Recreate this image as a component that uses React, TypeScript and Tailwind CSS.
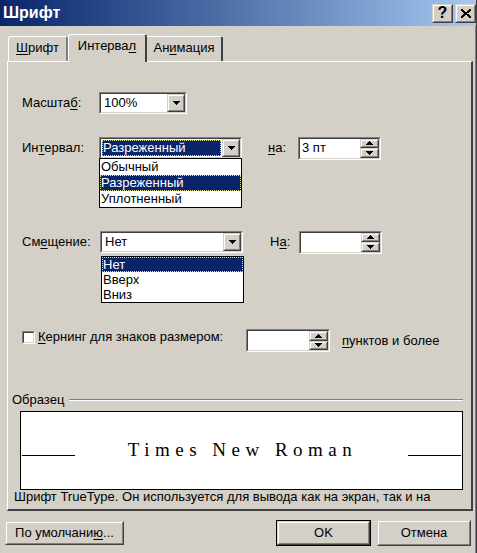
import React from "react";

const sunkenOuter = "border border-t-[#808080] border-l-[#808080] border-b-white border-r-white";
const sunkenInner = "border border-t-[#404040] border-l-[#404040] border-b-[#d4d0c8] border-r-[#d4d0c8]";
const raisedOuter = "border border-t-[#d4d0c8] border-l-[#d4d0c8] border-b-[#404040] border-r-[#404040]";
const raisedInner = "border border-t-white border-l-white border-b-[#808080] border-r-[#808080]";

function Down() {
  return (
    <svg width="7" height="4" shapeRendering="crispEdges">
      <path d="M0 0h7v1h-1v1h-1v1h-1v1h-1v-1h-1v-1h-1v-1h-1z" fill="#000" />
    </svg>
  );
}

function Up() {
  return (
    <svg width="7" height="4" shapeRendering="crispEdges">
      <path d="M3 0h1v1h1v1h1v1h1v1h-7v-1h1v-1h1v-1h1z" fill="#000" />
    </svg>
  );
}

function Raised({ className, children }: { className: string; children?: React.ReactNode }) {
  return (
    <div className={`${raisedOuter} ${className} bg-[#d4d0c8]`}>
      <div className={`${raisedInner} h-full w-full flex items-center justify-center`}>{children}</div>
    </div>
  );
}

function U({ children }: { children: React.ReactNode }) {
  return <span className="underline underline-offset-2">{children}</span>;
}

type Item = { label: string; sel?: boolean };

function Combo({
  width,
  value,
  focus,
  list,
  listClass,
  itemH,
}: {
  width: string;
  value: string;
  focus?: boolean;
  list?: Item[];
  listClass?: string;
  itemH?: string;
}) {
  return (
    <div className={`relative ${width} h-[22px]`}>
      <div className={`${sunkenOuter} h-full`}>
        <div className={`${sunkenInner} h-full bg-white flex`}>
          <div className="flex-1 flex items-center p-px">
            {focus ? (
              <div className="h-full w-full bg-[#0a246a] text-white px-[1px] flex items-center outline-1 outline-dotted outline-[#e0e0a0] -outline-offset-1">
                {value}
              </div>
            ) : (
              <span className="pl-[2px]">{value}</span>
            )}
          </div>
          <Raised className="w-[18px] h-full">
            <Down />
          </Raised>
        </div>
      </div>
      {list && (
        <div className={`absolute z-20 bg-white border border-black ${listClass}`}>
          {list.map((it) => (
            <div
              key={it.label}
              className={`${itemH} flex items-center pl-[1px] ${
                it.sel ? "bg-[#0a246a] text-white outline-1 outline-dotted outline-[#e0e0a0] -outline-offset-1" : ""
              }`}
            >
              {it.label}
            </div>
          ))}
        </div>
      )}
    </div>
  );
}

function Spin({ width, value }: { width: string; value?: string }) {
  return (
    <div className={`${sunkenOuter} ${width} h-[23px]`}>
      <div className={`${sunkenInner} h-full bg-white flex`}>
        <div className="flex-1 flex items-center pl-[2px]">{value}</div>
        <div className="flex flex-col w-[19px] h-full">
          <Raised className="flex-1">
            <Up />
          </Raised>
          <Raised className="flex-1">
            <Down />
          </Raised>
        </div>
      </div>
    </div>
  );
}

export default function App() {
  return (
    <div className="w-[477px] h-[553px] bg-[#d4d0c8] font-['Liberation_Sans',Arial,sans-serif] text-[13px] text-black overflow-hidden relative">
      <div className="absolute right-0 top-0 bottom-0 w-[1px] bg-[#404040]" />
      <div className="absolute right-[1px] top-[26px] bottom-0 w-[1px] bg-[#808080]" />

      {/* title bar */}
      <div className="h-[26px] flex items-center justify-between pl-[3px] pr-[1px] bg-gradient-to-r from-[#0a246a] to-[#a6caf0]">
        <span className="text-white font-bold text-[16px] leading-none">Шрифт</span>
        <div className="flex gap-[2px]">
          <Raised className="w-[21px] h-[19px]">
            <span className="font-bold text-[16px] leading-none">?</span>
          </Raised>
          <Raised className="w-[21px] h-[19px]">
            <svg width="10" height="9" shapeRendering="crispEdges">
              <path d="M0 0L10 9M10 0L0 9" stroke="#000" strokeWidth="2" />
            </svg>
          </Raised>
        </div>
      </div>

      {/* tabs */}
      <div className="relative z-10 mt-[8px] ml-[8px] h-[27px] flex items-end">
        <div className="w-[60px] h-[25px] border-l border-t border-white border-r-2 border-r-[#808080] rounded-tl-[3px] rounded-tr-[3px] flex items-center justify-center pb-[2px]">
          <U>Ш</U>рифт
        </div>
        <div className="w-[79px] h-[28px] -mb-[1px] bg-[#d4d0c8] border-l border-t border-white border-r-2 border-r-[#404040] rounded-tl-[3px] rounded-tr-[3px] flex items-center justify-center pb-[5px]">
          Интерва<U>л</U>
        </div>
        <div className="w-[76px] h-[25px] border-t border-white border-r-2 border-r-[#404040] rounded-tr-[3px] flex items-center justify-center pb-[2px]">
          Ан<U>и</U>мация
        </div>
      </div>

      {/* panel */}
      <div className="ml-[7px] w-[466px] h-[450px] border-l border-t border-white border-r-2 border-r-[#404040] border-b-2 border-b-[#404040] flex flex-col">
        <div className="mt-[30px] h-[22px] flex items-center pl-[14px]">
          <span className="w-[77px]">
            Масшта<U>б</U>:
          </span>
          <Combo width="w-[88px]" value="100%" />
        </div>

        <div className="mt-[23px] h-[22px] flex items-center pl-[14px]">
          <span className="w-[77px]">
            Ин<U>т</U>ервал:
          </span>
          <Combo
            width="w-[143px]"
            value="Разреженный"
            focus
            list={[{ label: "Обычный" }, { label: "Разреженный", sel: true }, { label: "Уплотненный" }]}
            listClass="left-0 top-[21px] w-[143px]"
            itemH="h-[16px]"
          />
          <span className="ml-[26px] w-[30px]">
            <U>н</U>а:
          </span>
          <Spin width="w-[83px]" value="3 пт" />
        </div>

        <div className="mt-[72px] h-[22px] flex items-center pl-[14px]">
          <span className="w-[78px]">
            См<U>е</U>щение:
          </span>
          <Combo
            width="w-[143px]"
            value="Нет"
            list={[{ label: "Нет", sel: true }, { label: "Вверх" }, { label: "Вниз" }]}
            listClass="left-[1px] top-[25px] w-[143px]"
            itemH="h-[15px]"
          />
          <span className="ml-[27px] w-[29px]">
            Н<U>а</U>:
          </span>
          <Spin width="w-[83px]" value="" />
        </div>

        <div className="mt-[76px] h-[24px] flex items-start pl-[14px]">
          <div className={`${sunkenOuter} w-[13px] h-[13px] mt-[2px]`}>
            <div className={`${sunkenInner} h-full bg-white`} />
          </div>
          <span className="ml-[3px] w-[208px] leading-[16px]">
            <U>К</U>ернинг для знаков размером:
          </span>
          <Spin width="w-[84px]" />
          <span className="ml-[12px] leading-[24px]">
            <U>п</U>унктов и более
          </span>
        </div>

        <div className="mt-[40px] h-[14px] flex items-center pl-[4px] pr-[8px]">
          <span className="leading-[14px]">Образец</span>
          <div className="flex-1 ml-[5px] border-t border-t-[#808080] border-b border-b-white" />
        </div>

        <div className="mt-[4px] ml-[12px] w-[443px] h-[79px] bg-white border border-black pt-[27px]">
          <div className="flex items-baseline">
            <div className="ml-[1px] w-[53px] h-[1px] bg-black" />
            <div className="flex-1 text-center font-['Liberation_Serif',serif] text-[19px] leading-[22px] tracking-[5.5px] pl-[2px]">
              Times New Roman
            </div>
            <div className="mr-[1px] w-[53px] h-[1px] bg-black" />
          </div>
        </div>

        <div className="h-[14px] leading-[14px] pl-[6px]">
          Шрифт TrueType. Он используется для вывода как на экран, так и на
        </div>
      </div>

      {/* buttons */}
      <div className="mt-[9px] h-[26px] flex items-center">
        <Raised className="ml-[5px] w-[119px] h-[24px]">
          По умолчани<U>ю</U>...
        </Raised>
        <div className="ml-[152px] w-[95px] h-[26px] border border-black">
          <Raised className="w-full h-full">OK</Raised>
        </div>
        <Raised className="ml-[6px] w-[94px] h-[26px]">Отмена</Raised>
      </div>
    </div>
  );
}
